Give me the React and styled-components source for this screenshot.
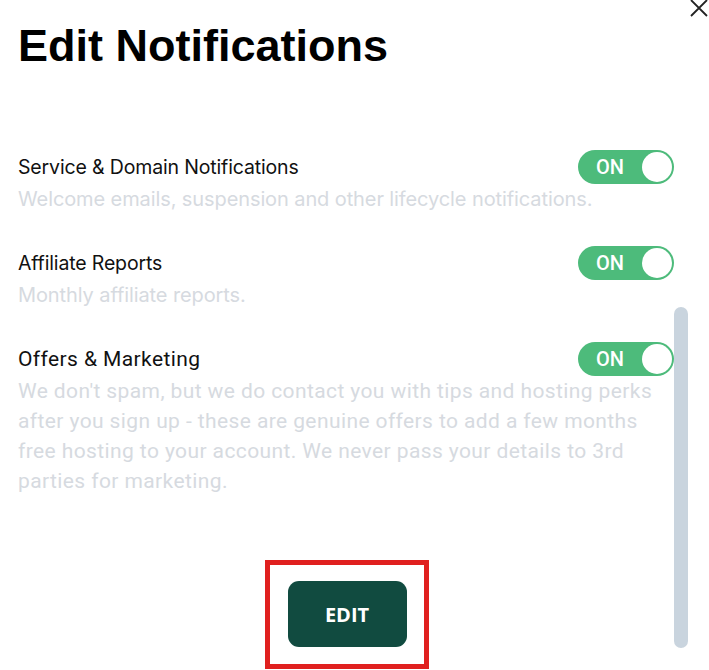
import React from 'react';
import styled, { createGlobalStyle } from 'styled-components';

const GlobalStyle = createGlobalStyle`
  html, body {
    margin: 0;
    padding: 0;
    background: #ffffff;
  }
  body {
    font-family: Inter, "Liberation Sans", sans-serif;
    overflow: hidden;
  }
`;

const Modal = styled.div`
  position: relative;
  width: 709px;
  height: 670px;
  overflow: hidden;
  background: #ffffff;
  box-sizing: border-box;
  padding: 20px 0 0 18px;
`;

const CloseButton = styled.button`
  position: absolute;
  top: -2px;
  right: -2px;
  width: 24px;
  height: 20px;
  padding: 0;
  border: none;
  background: none;
  cursor: pointer;
`;

const Title = styled.h1`
  margin: 0;
  font-family: "Liberation Sans", Arial, sans-serif;
  font-weight: 700;
  font-size: 45px;
  line-height: 52px;
  color: #000000;
`;

const List = styled.div`
  display: flex;
  flex-direction: column;
  gap: 32px;
  margin-top: 78px;
  width: 656px;
`;

const Row = styled.div`
  display: flex;
  flex-direction: column;
`;

const RowHead = styled.div`
  display: flex;
  align-items: center;
  justify-content: space-between;
  height: 34px;
`;

const Label = styled.span`
  font-family: ${p => (p.$alt ? 'Roboto, sans-serif' : 'Inter, sans-serif')};
  font-size: ${p => (p.$alt ? '21px' : '19.5px')};
  color: #111111;
  letter-spacing: ${p => (p.$alt ? '0.4px' : '-0.15px')};
`;

const Description = styled.p`
  margin: 0;
  font-family: ${p => (p.$alt ? 'Roboto, sans-serif' : 'Inter, sans-serif')};
  font-size: ${p => (p.$alt ? '21px' : '20px')};
  line-height: 30px;
  color: #d6dae0;
  letter-spacing: ${p => (p.$alt ? '0.4px' : '-0.1px')};
  max-width: 655px;
`;

const Toggle = styled.button`
  display: flex;
  align-items: center;
  justify-content: space-between;
  width: 96px;
  height: 34px;
  padding: 0 2px 0 18px;
  box-sizing: border-box;
  border: none;
  border-radius: 17px;
  background: #4dbb7b;
  color: #ffffff;
  font-family: Roboto, sans-serif;
  font-weight: 500;
  font-size: 20px;
  cursor: pointer;
`;

const Knob = styled.span`
  width: 30px;
  height: 30px;
  border-radius: 50%;
  background: #ffffff;
`;

const Footer = styled.div`
  display: flex;
  justify-content: flex-start;
  padding-left: 247px;
  margin-top: 64px;
`;

const Highlight = styled.div`
  width: 164px;
  height: 109px;
  box-sizing: border-box;
  border: 5px solid #e0201f;
  display: flex;
  align-items: flex-start;
  justify-content: center;
  padding-top: 16px;
`;

const EditButton = styled.button`
  width: 119px;
  height: 66px;
  border: none;
  border-radius: 11px;
  background: #114b40;
  color: #ffffff;
  font-family: "Open Sans", sans-serif;
  font-weight: 700;
  font-size: 20px;
  cursor: pointer;
`;

const ScrollThumb = styled.div`
  position: absolute;
  left: 674px;
  top: 307px;
  width: 14px;
  height: 341px;
  border-radius: 7px;
  background: #c9d4de;
`;

const items = [
  {
    label: 'Service & Domain Notifications',
    text: 'Welcome emails, suspension and other lifecycle notifications.',
  },
  {
    label: 'Affiliate Reports',
    text: 'Monthly affiliate reports.',
  },
  {
    label: 'Offers & Marketing',
    text: "We don't spam, but we do contact you with tips and hosting perks after you sign up - these are genuine offers to add a few months free hosting to your account. We never pass your details to 3rd parties for marketing.",
    alt: true,
  },
];

export default function App() {
  return (
    <>
      <GlobalStyle />
      <Modal>
        <CloseButton aria-label="Close">
          <svg width="24" height="20" viewBox="0 0 24 20">
            <path d="M4 2 L20 18 M20 2 L4 18" stroke="#222" strokeWidth="1.8" fill="none" />
          </svg>
        </CloseButton>
        <Title>Edit Notifications</Title>
        <List>
          {items.map(item => (
            <Row key={item.label}>
              <RowHead>
                <Label $alt={item.alt}>{item.label}</Label>
                <Toggle>
                  ON
                  <Knob />
                </Toggle>
              </RowHead>
              <Description $alt={item.alt}>{item.text}</Description>
            </Row>
          ))}
        </List>
        <Footer>
          <Highlight>
            <EditButton>EDIT</EditButton>
          </Highlight>
        </Footer>
        <ScrollThumb />
      </Modal>
    </>
  );
}
